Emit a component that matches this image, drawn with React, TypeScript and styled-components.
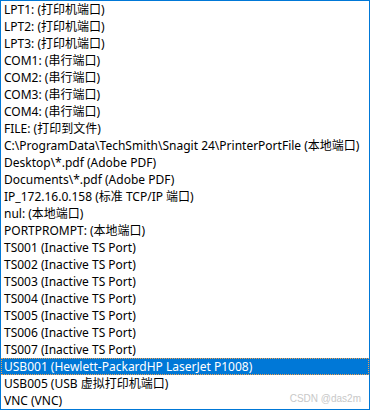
import React from "react";
import styled, { createGlobalStyle } from "styled-components";

const GlobalStyle = createGlobalStyle`
  html, body {
    margin: 0;
    padding: 0;
    background: #ffffff;
  }
`;

const ListBox = styled.div`
  position: relative;
  box-sizing: border-box;
  width: 370px;
  height: 410px;
  border: 1px solid #0078d7;
  background: #ffffff;
  overflow: hidden;
  font-family: "Segoe UI", "Noto Sans", "Noto Sans CJK SC", sans-serif;
  font-size: 12px;
  color: #000000;
`;

const Item = styled.div<{ $selected?: boolean }>`
  box-sizing: border-box;
  height: 17px;
  line-height: 15px;
  padding: 0 0 0 2px;
  white-space: nowrap;
  border: 1px dotted ${(p) => (p.$selected ? "#f0a050" : "transparent")};
  background: ${(p) => (p.$selected ? "#0078d7" : "transparent")};
  color: ${(p) => (p.$selected ? "#ffffff" : "#000000")};
`;

const Watermark = styled.div`
  position: absolute;
  right: 8px;
  bottom: 5px;
  font-family: "Liberation Sans", Arial, sans-serif;
  font-size: 10px;
  color: #c8c8c8;
`;

const items = [
  "LPT1: (打印机端口)",
  "LPT2: (打印机端口)",
  "LPT3: (打印机端口)",
  "COM1: (串行端口)",
  "COM2: (串行端口)",
  "COM3: (串行端口)",
  "COM4: (串行端口)",
  "FILE: (打印到文件)",
  "C:\\ProgramData\\TechSmith\\Snagit 24\\PrinterPortFile (本地端口)",
  "Desktop\\*.pdf (Adobe PDF)",
  "Documents\\*.pdf (Adobe PDF)",
  "IP_172.16.0.158 (标准 TCP/IP 端口)",
  "nul: (本地端口)",
  "PORTPROMPT: (本地端口)",
  "TS001 (Inactive TS Port)",
  "TS002 (Inactive TS Port)",
  "TS003 (Inactive TS Port)",
  "TS004 (Inactive TS Port)",
  "TS005 (Inactive TS Port)",
  "TS006 (Inactive TS Port)",
  "TS007 (Inactive TS Port)",
  "USB001 (Hewlett-PackardHP LaserJet P1008)",
  "USB005 (USB 虚拟打印机端口)",
  "VNC (VNC)",
];

export default function App() {
  return (
    <>
      <GlobalStyle />
      <ListBox>
        {items.map((text) => (
          <Item key={text} $selected={text.startsWith("USB001")}>
            {text}
          </Item>
        ))}
        <Watermark>CSDN @das2m</Watermark>
      </ListBox>
    </>
  );
}
